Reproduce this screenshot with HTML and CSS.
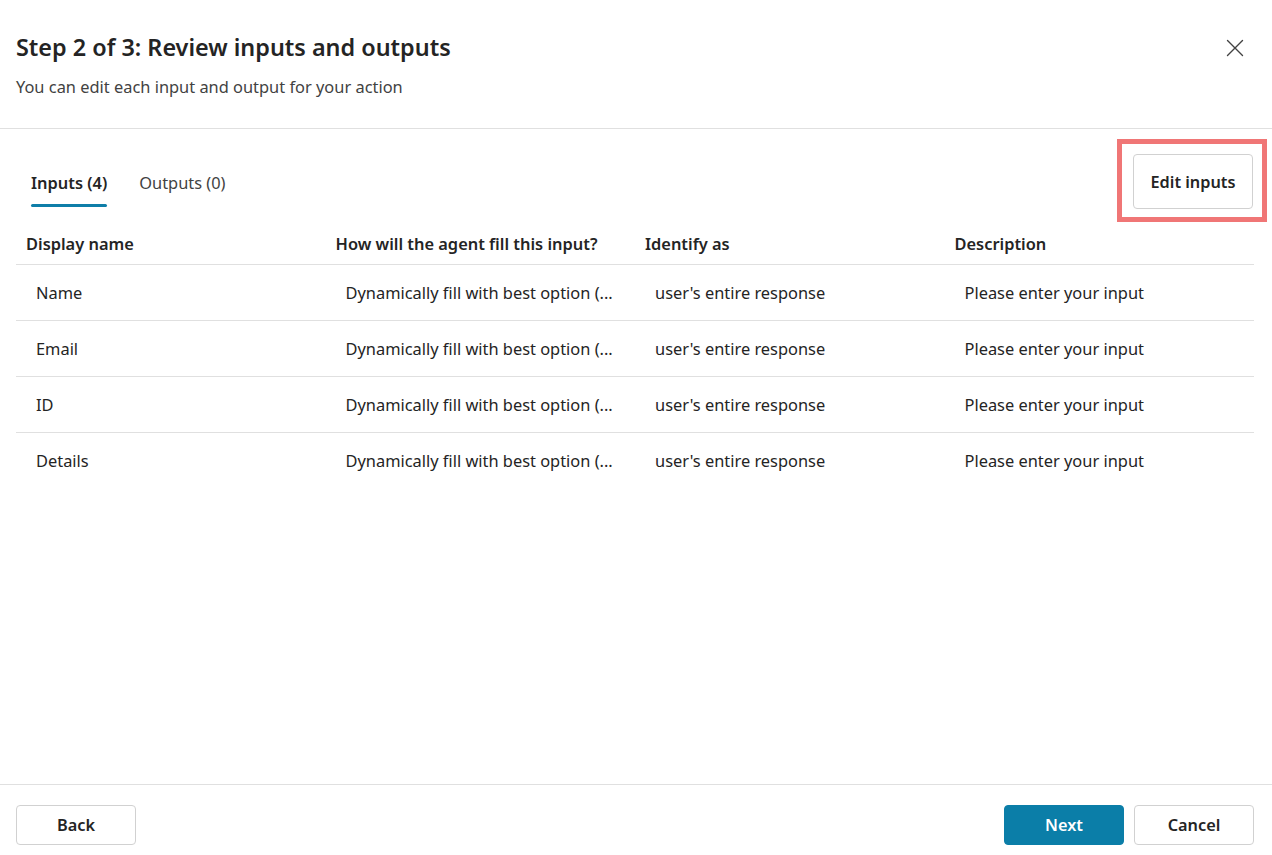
FILE: index.html
```html
<!DOCTYPE html>
<html>
<head>
<meta charset="utf-8">
<link rel="stylesheet" href="styles.css">
</head>
<body>
<div class="dialog">
  <header class="head">
    <div class="head-text">
      <h1 class="title">Step 2 of 3: Review inputs and outputs</h1>
      <p class="subtitle">You can edit each input and output for your action</p>
    </div>
    <button class="close" aria-label="Close">
      <svg width="18" height="18" viewBox="0 0 18 18"><path d="M1.5 1.5 L16.5 16.5 M16.5 1.5 L1.5 16.5" stroke="#424242" stroke-width="1.4" fill="none" stroke-linecap="round"/></svg>
    </button>
  </header>
  <main class="body">
    <div class="toolbar">
      <div class="tabs">
        <div class="tab active">Inputs (4)</div>
        <div class="tab">Outputs (0)</div>
      </div>
      <div class="highlight">
        <button class="btn">Edit inputs</button>
      </div>
    </div>
    <table class="grid">
      <thead>
        <tr><th>Display name</th><th>How will the agent fill this input?</th><th>Identify as</th><th>Description</th></tr>
      </thead>
      <tbody>
        <tr><td>Name</td><td><span class="trunc">Dynamically fill with best option (...</span></td><td>user's entire response</td><td>Please enter your input</td></tr>
        <tr><td>Email</td><td><span class="trunc">Dynamically fill with best option (...</span></td><td>user's entire response</td><td>Please enter your input</td></tr>
        <tr><td>ID</td><td><span class="trunc">Dynamically fill with best option (...</span></td><td>user's entire response</td><td>Please enter your input</td></tr>
        <tr><td>Details</td><td><span class="trunc">Dynamically fill with best option (...</span></td><td>user's entire response</td><td>Please enter your input</td></tr>
      </tbody>
    </table>
  </main>
  <footer class="foot">
    <button class="btn">Back</button>
    <div class="foot-right">
      <button class="btn primary">Next</button>
      <button class="btn">Cancel</button>
    </div>
  </footer>
</div>
</body>
</html>
```

FILE: styles.css
```css
* { box-sizing: border-box; }
html, body { margin: 0; padding: 0; background: #fff; }
body {
  font-family: "Noto Sans", "Open Sans", sans-serif;
  color: #242424;
  width: 1272px;
  height: 855px;
  overflow: hidden;
}
.dialog {
  display: flex;
  flex-direction: column;
  height: 855px;
}
.head {
  display: flex;
  justify-content: space-between;
  align-items: flex-start;
  padding: 30px 28px 0 16px;
  height: 129px;
  border-bottom: 1px solid #e0e0e0;
}
.title {
  margin: 0;
  font-size: 23.4px;
  font-weight: 600;
  line-height: 34px;
  color: #242424;
}
.subtitle {
  margin: 13px 0 0;
  font-size: 16.4px;
  line-height: 20px;
  color: #424242;
}
.close {
  border: 0;
  background: none;
  padding: 0;
  margin-top: 9px;
  width: 18px;
  height: 18px;
  display: flex;
}
.body {
  flex: 1;
  padding: 0 18px 0 16px;
}
.toolbar {
  display: flex;
  justify-content: space-between;
  align-items: flex-start;
  height: 95px;
}
.tabs {
  display: flex;
  gap: 32px;
  padding: 41px 0 0 15px;
}
.tab {
  font-size: 16.4px;
  line-height: 26px;
  color: #424242;
  position: relative;
  padding-bottom: 10px;
}
.tab.active {
  font-weight: 600;
  color: #242424;
}
.tab.active::after {
  content: "";
  position: absolute;
  left: 0;
  right: 0;
  bottom: -1px;
  height: 3px;
  border-radius: 2px;
  background: #0e7ea8;
}
.highlight {
  margin-top: 10px;
  margin-right: -13px;
  border: 5px solid #f07676;
  padding: 10px 9px 8px 11px;
}
.btn {
  font-family: inherit;
  font-size: 16.3px;
  font-weight: 600;
  color: #242424;
  background: #fff;
  border: 1px solid #d1d1d1;
  border-radius: 4px;
  width: 120px;
  height: 40px;
  padding: 0;
}
.highlight .btn {
  height: 55px;
  display: block;
}
.btn.primary {
  background: #0b7ea8;
  border-color: #0b7ea8;
  color: #fff;
}
.grid {
  width: 1238px;
  border-collapse: collapse;
  table-layout: fixed;
}
.grid th {
  text-align: left;
  font-weight: 600;
  font-size: 16.4px;
  height: 40px;
  padding: 0 10px 0;
  border-bottom: 1px solid #e0e0e0;
  color: #242424;
  vertical-align: middle;
}
.grid td {
  font-size: 16.4px;
  height: 56px;
  padding: 1px 20px 0;
  color: #242424;
  border-bottom: 1px solid #e0e0e0;
  white-space: nowrap;
  overflow: hidden;
}
.grid tbody tr:last-child td { border-bottom: 0; }
.trunc { display: block; overflow: hidden; }
.foot {
  display: flex;
  justify-content: space-between;
  align-items: flex-start;
  height: 71px;
  border-top: 1px solid #e0e0e0;
  padding: 20px 18px 0 16px;
}
.foot-right { display: flex; gap: 10px; }
```
